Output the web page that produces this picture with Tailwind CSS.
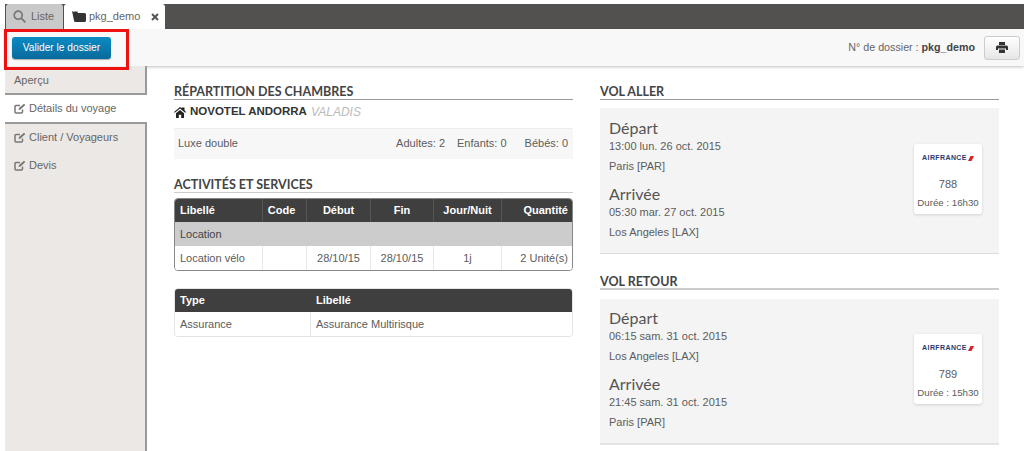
<!DOCTYPE html>
<html lang="fr">
<head>
  <meta charset="UTF-8">
  <title>pkg_demo</title>
  <script src="https://cdn.jsdelivr.net/npm/@tailwindcss/browser@4"></script>
</head>
<body class="bg-white">
  <div class="relative w-[1024px] h-[451px] overflow-hidden pt-[4px] pl-[5px] font-['Liberation_Sans',sans-serif] text-[11px] text-[#5c5c5c]">

    <!-- tabs -->
    <div class="flex items-end h-[25px] bg-[#525150] pl-[1px]">
      <div class="flex items-center gap-[5px] w-[57px] h-[25px] bg-[#c9c9c9] pl-[7px] text-[#666] rounded-t-[3px]">
        <svg class="w-[13px] h-[13px]" viewBox="0 0 13 13" fill="none" stroke="#777" stroke-width="1.700"><circle cx="5.200" cy="5.200" r="4"/><path d="M8.200 8.200l4.200 4.200"/></svg>
        <span>Liste</span>
      </div>
      <div class="flex items-center gap-[3px] w-[101px] h-[25px] ml-[1px] bg-white pl-[8px] text-[#666] rounded-t-[3px]">
        <svg class="w-[14px] h-[11px]" viewBox="0 0 14 11" fill="#333"><path d="M0 0l2 1 1-1 1 1 1-1 1 2h6.500A1.500 1.500 0 0 1 14 3.500V9.500A1.500 1.500 0 0 1 12.500 11H3.500A1.500 1.500 0 0 1 2 9.500z"/></svg>
        <span>pkg_demo</span>
        <svg class="w-[8px] h-[8px] ml-[8px]" viewBox="0 0 8 8" stroke="#555" stroke-width="2"><path d="M1 1l6 6M7 1L1 7"/></svg>
      </div>
    </div>

    <!-- toolbar -->
    <div class="flex items-center justify-between h-[37px] bg-[#f8f8f8] shadow-[0_1px_3px_rgba(0,0,0,0.25)] pl-[7px] pr-[4px]">
      <button class="w-[99px] h-[22px] rounded-[3px] bg-gradient-to-b from-[#0a8cc4] to-[#0a6a9c] text-white text-[10.200px] shadow-[0_1px_1px_rgba(0,0,0,0.3)]">Valider le dossier</button>
      <div class="flex items-center gap-[9px]">
        <span class="text-[10.700px] text-[#666]">N° de dossier : <b class="text-[#444]">pkg_demo</b></span>
        <div class="flex items-center justify-center w-[36px] h-[24px] rounded-[3px] border border-[#ccc] bg-gradient-to-b from-white to-[#e6e6e6]">
          <svg class="w-[12px] h-[11px]" viewBox="0 0 12 11" fill="#333"><path d="M3 0h6v3H3zM1.500 3.500h9A1.500 1.500 0 0 1 12 5v3h-2V6.500H2V8H0V5a1.500 1.500 0 0 1 1.500-1.500zM3 7.500h6V11H3z"/></svg>
        </div>
      </div>
    </div>

    <div class="flex">
      <!-- sidebar -->
      <div class="w-[142px] h-[385px] shrink-0 text-[11px] text-[#666]">
        <div class="flex items-center h-[29px] pl-[9px] pt-[1px] bg-[#ece8e5] border-r-2 border-b-2 border-[#9a9a9a]">Aperçu</div>
        <div class="flex items-center gap-[3px] h-[27px] pl-[9px] bg-white">
          <svg class="w-[12px] h-[11px]" viewBox="0 0 12 11" fill="none" stroke="#777" stroke-width="1.500"><path d="M8.500 6.500V9a1 1 0 0 1-1 1H2a1 1 0 0 1-1-1V3.500a1 1 0 0 1 1-1h4"/><path d="M4.500 7l.5-2 5-4.300 1.300 1.300L6.500 6.500z" fill="#777" stroke="none"/></svg>
          <span>Détails du voyage</span>
        </div>
        <div class="h-[329px] bg-[#ece8e5] border-r-2 border-t-2 border-[#9a9a9a]">
          <div class="flex items-center gap-[3px] h-[27px] pl-[9px]">
            <svg class="w-[12px] h-[11px]" viewBox="0 0 12 11" fill="none" stroke="#777" stroke-width="1.500"><path d="M8.500 6.500V9a1 1 0 0 1-1 1H2a1 1 0 0 1-1-1V3.500a1 1 0 0 1 1-1h4"/><path d="M4.500 7l.5-2 5-4.300 1.300 1.300L6.500 6.500z" fill="#777" stroke="none"/></svg>
            <span>Client / Voyageurs</span>
          </div>
          <div class="flex items-center gap-[3px] h-[29px] pl-[9px]">
            <svg class="w-[12px] h-[11px]" viewBox="0 0 12 11" fill="none" stroke="#777" stroke-width="1.500"><path d="M8.500 6.500V9a1 1 0 0 1-1 1H2a1 1 0 0 1-1-1V3.500a1 1 0 0 1 1-1h4"/><path d="M4.500 7l.5-2 5-4.300 1.300 1.300L6.500 6.500z" fill="#777" stroke="none"/></svg>
            <span>Devis</span>
          </div>
        </div>
      </div>

      <!-- left column -->
      <div class="w-[399px] ml-[27px] pt-[17px] shrink-0">
        <h2 class="h-[17px] border-b border-[#999] font-['Lato',sans-serif] font-bold text-[12.500px] leading-[17px] text-[#444]">RÉPARTITION DES CHAMBRES</h2>
        <div class="flex items-center gap-[4px] h-[24px] text-[11.500px] font-bold text-[#333]">
          <svg class="w-[12px] h-[11px]" viewBox="0 0 12 11" fill="#222"><path d="M9 .5h1.500v2.800L12 5l-.8.8L6 1.400.8 5.800 0 5l6-5 1.500 1.300V.5zM2 6.300l4-3.400 4 3.400V11H7.200V7.800H4.800V11H2z"/></svg>
          <span>NOVOTEL ANDORRA</span>
          <span class="font-normal italic text-[12px] text-[#bbb]">VALADIS</span>
        </div>
        <div class="flex items-center justify-between h-[31px] mt-[4px] pl-[4px] pr-[5px] pb-[2px] bg-[#f7f7f7] border-t border-[#eee]">
          <span>Luxe double</span>
          <div class="flex">
            <span>Adultes: 2</span>
            <span class="ml-[12px]">Enfants: 0</span>
            <span class="ml-[18px]">Bébés: 0</span>
          </div>
        </div>

        <h2 class="h-[17px] mt-[17px] border-b border-[#ccc] font-['Lato',sans-serif] font-bold text-[12.500px] leading-[17px] text-[#444]">ACTIVITÉS ET SERVICES</h2>

        <div class="mt-[5px] rounded-[4px] border border-[#888] overflow-hidden">
          <div class="grid grid-cols-[88px_44px_64px_63px_68px_1fr] h-[23px] items-center bg-[#3f3f3f] font-bold text-white text-center">
            <div class="text-left pl-[5px] h-full flex items-center border-r border-[#555]">Libellé</div>
            <div class="h-full flex items-center justify-center pr-[6px] border-r border-[#555]">Code</div>
            <div class="h-full flex items-center justify-center border-r border-[#555]">Début</div>
            <div class="h-full flex items-center justify-center border-r border-[#555]">Fin</div>
            <div class="h-full flex items-center justify-center border-r border-[#555]">Jour/Nuit</div>
            <div class="text-right pr-[4px]">Quantité</div>
          </div>
          <div class="flex items-center h-[24px] pl-[5px] bg-[#cccccc] text-[#444]">Location</div>
          <div class="grid grid-cols-[88px_44px_64px_63px_68px_1fr] h-[24px] items-center bg-white text-center">
            <div class="text-left pl-[5px] h-full flex items-center border-r border-[#e8e8e8]">Location vélo</div>
            <div class="h-full border-r border-[#e8e8e8]"></div>
            <div class="h-full flex items-center justify-center border-r border-[#e8e8e8]">28/10/15</div>
            <div class="h-full flex items-center justify-center border-r border-[#e8e8e8]">28/10/15</div>
            <div class="h-full flex items-center justify-center border-r border-[#e8e8e8]">1j</div>
            <div class="text-right pr-[4px]">2 Unité(s)</div>
          </div>
        </div>

        <div class="mt-[17px] rounded-[4px] border border-[#e4e4e4] overflow-hidden">
          <div class="grid grid-cols-[136px_1fr] h-[23px] items-center bg-[#3f3f3f] font-bold text-white">
            <div class="pl-[5px]">Type</div>
            <div class="pl-[5px]">Libellé</div>
          </div>
          <div class="grid grid-cols-[136px_1fr] h-[24px] items-center bg-white">
            <div class="pl-[5px] h-full flex items-center border-r border-[#e8e8e8]">Assurance</div>
            <div class="pl-[5px]">Assurance Multirisque</div>
          </div>
        </div>
      </div>

      <!-- right column -->
      <div class="w-[399px] ml-[27px] pt-[17px] shrink-0">
        <h2 class="h-[17px] border-b border-[#999] font-['Lato',sans-serif] font-bold text-[12.500px] leading-[17px] text-[#444]">VOL ALLER</h2>
        <div class="flex justify-between h-[146px] mt-[8px] pl-[9px] pr-[17px] bg-[#f4f4f4] border-b border-[#ddd]">
          <div>
            <div class="mt-[10px] font-['Lato',sans-serif] text-[16px] leading-[20px] text-[#555]">Départ</div>
            <div class="leading-[14px] mt-[1px]">13:00 lun. 26 oct. 2015</div>
            <div class="leading-[14px] mt-[6px]">Paris [PAR]</div>
            <div class="mt-[11px] font-['Lato',sans-serif] text-[16px] leading-[20px] text-[#555]">Arrivée</div>
            <div class="leading-[14px] mt-[1px]">05:30 mar. 27 oct. 2015</div>
            <div class="leading-[14px] mt-[6px]">Los Angeles [LAX]</div>
          </div>
          <div class="w-[68px] h-[70px] mt-[36px] rounded-[3px] bg-white shadow-[0_1px_3px_rgba(0,0,0,0.15)] text-center">
            <div class="flex items-center justify-center gap-[1px] h-[14px] pt-[7px] box-content font-bold text-[7px] text-[#2a3a70] tracking-[0.4px]">AIRFRANCE<svg class="w-[6px] h-[5px]" viewBox="0 0 6 5" fill="#d8232a"><path d="M2.500 0H6L3.500 5H0z"/></svg></div>
            <div class="mt-[12px] leading-[14px] text-[11px]">788</div>
            <div class="mt-[5px] leading-[14px] text-[9.700px] whitespace-nowrap">Durée : 16h30</div>
          </div>
        </div>

        <h2 class="h-[17px] mt-[19px] border-b-2 border-[#ccc] font-['Lato',sans-serif] font-bold text-[12.500px] leading-[17px] text-[#444]">VOL RETOUR</h2>
        <div class="flex justify-between h-[146px] mt-[9px] pl-[9px] pr-[17px] bg-[#f4f4f4] border-b-2 border-[#e4e4e4]">
          <div>
            <div class="mt-[9px] font-['Lato',sans-serif] text-[16px] leading-[20px] text-[#555]">Départ</div>
            <div class="leading-[14px] mt-[1px]">06:15 sam. 31 oct. 2015</div>
            <div class="leading-[14px] mt-[6px]">Los Angeles [LAX]</div>
            <div class="mt-[11px] font-['Lato',sans-serif] text-[16px] leading-[20px] text-[#555]">Arrivée</div>
            <div class="leading-[14px] mt-[1px]">21:45 sam. 31 oct. 2015</div>
            <div class="leading-[14px] mt-[6px]">Paris [PAR]</div>
          </div>
          <div class="w-[68px] h-[70px] mt-[35px] rounded-[3px] bg-white shadow-[0_1px_3px_rgba(0,0,0,0.15)] text-center">
            <div class="flex items-center justify-center gap-[1px] h-[14px] pt-[7px] box-content font-bold text-[7px] text-[#2a3a70] tracking-[0.4px]">AIRFRANCE<svg class="w-[6px] h-[5px]" viewBox="0 0 6 5" fill="#d8232a"><path d="M2.500 0H6L3.500 5H0z"/></svg></div>
            <div class="mt-[12px] leading-[14px] text-[11px]">789</div>
            <div class="mt-[5px] leading-[14px] text-[9.700px] whitespace-nowrap">Durée : 15h30</div>
          </div>
        </div>
      </div>
    </div>

    <!-- red annotation box around the button -->
    <div class="absolute left-[4px] top-[29px] w-[125px] h-[41px] border-[3px] border-[#ee1111]"></div>
  </div>
</body>
</html>
